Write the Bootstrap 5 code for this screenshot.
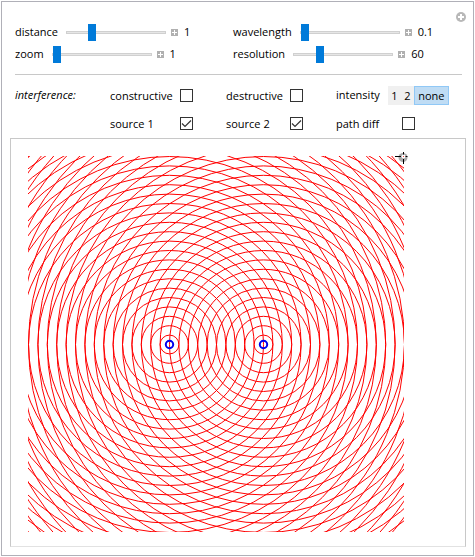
<!DOCTYPE html>
<html lang="en">
<head>
<meta charset="utf-8">
<meta name="viewport" content="width=device-width, initial-scale=1">
<title>Two-source interference</title>
<link rel="stylesheet" href="https://cdn.jsdelivr.net/npm/bootstrap@5.3.0/dist/css/bootstrap.min.css">
<style>
body { font: 11px/16px "Open Sans", "Noto Sans", sans-serif; color: #000; background: #fff; padding: 1px 1px 0; }
.demo { border: 1px solid #b0b0b8; padding: 19px 7px 8px 8px; }
.controls { padding: 0 3px 1px 5px; }
.ctl { height: 22px; gap: 8px; }
.ctl-a { width: 218px; }
.slider { appearance: none; -webkit-appearance: none; width: 100px; height: 17px; margin: 0; background: transparent; }
.slider::-webkit-slider-runnable-track { height: 3px; background: #e6e6e6; border: 1px solid #d0d0d0; }
.slider::-webkit-slider-thumb { -webkit-appearance: none; width: 8px; height: 17px; margin-top: -8px; background: #007ad9; border: 0; }
.step { width: 7px; height: 7px; margin: 0 -2px 0 -3px; line-height: 7px; }
.step svg, .more svg { display: block; }
.more { top: 10px; right: 7px; }
.rule { border-top: 1px solid #c8c8c8; margin: 9px 1px 0 0; }
.opts { display: grid; grid-template-columns: 95px 116px 110px 1fr; padding-top: 6px; }
.opt { height: 28px; }
.opt label { width: 70px; padding-top: 2px; }
.opt-b label { width: 64px; }
.opt-c label { width: 66px; }
.tick { appearance: none; -webkit-appearance: none; width: 13px; height: 13px; margin: 0; border: 1px solid #333; background: #fff; }
.tick:checked { background: url("data:image/svg+xml,%3Csvg xmlns='http://www.w3.org/2000/svg' viewBox='0 0 11 11'%3E%3Cpath d='M1 5.5 4 8.500 10 2.500' fill='none' stroke='%23333' stroke-width='1.2'/%3E%3C/svg%3E"); }
.seg { background: #f0f0f0; height: 19px; }
.seg button { border: 0; background: none; padding: 0; width: 13px; color: #000; line-height: 17px; }
.seg .chosen { width: 35px; background: #bfdcf4; border: 1px solid #90c8f6; }
.stage { border: 1px solid #c8c8c8; border-bottom-color: #e2e2e2; padding: 17px 61px 14px 17px; }
.plot { display: block; width: 100%; }
.locator { width: 13px; height: 13px; top: -5px; right: -4px; }
</style>
<script src="https://cdn.jsdelivr.net/npm/bootstrap@5.3.0/dist/js/bootstrap.bundle.min.js"></script>
</head>
<body>
<svg class="d-none"><symbol id="plus" viewBox="0 0 7 7"><path fill="#b0b0b0" d="M0 0h7v7H0z"/><path fill="#fff" d="M3 1h1v5H3zM1 3h5v1H1z"/></symbol></svg>
<main class="demo position-relative">
<button class="more btn p-0 border-0 position-absolute" aria-label="More options"><svg width="10" height="10"><circle cx="5" cy="5" r="5" fill="#b8b8b8"/><path d="M4 2h2v2h2v2H6v2H4V6H2V4h2z" fill="#fff"/></svg></button>
<section class="controls">
<div class="d-flex">
<div class="ctl ctl-a d-flex align-items-center"><label for="distance">distance</label><input class="slider" id="distance" type="range" min="0" max="100" value="23"><button class="step btn p-0 border-0" aria-label="Expand distance"><svg width="7" height="7"><use href="#plus"/></svg></button><output>1</output></div>
<div class="ctl d-flex align-items-center"><label for="wavelength">wavelength</label><input class="slider" id="wavelength" type="range" min="0" max="100" value="0"><button class="step btn p-0 border-0" aria-label="Expand wavelength"><svg width="7" height="7"><use href="#plus"/></svg></button><output>0.1</output></div>
</div>
<div class="d-flex">
<div class="ctl ctl-a d-flex align-items-center"><label for="zoom">zoom</label><input class="slider" id="zoom" type="range" min="0" max="100" value="0"><button class="step btn p-0 border-0" aria-label="Expand zoom"><svg width="7" height="7"><use href="#plus"/></svg></button><output>1</output></div>
<div class="ctl d-flex align-items-center"><label for="resolution">resolution</label><input class="slider" id="resolution" type="range" min="0" max="100" value="24"><button class="step btn p-0 border-0" aria-label="Expand resolution"><svg width="7" height="7"><use href="#plus"/></svg></button><output>60</output></div>
</div>
<div class="rule"></div>
<div class="opts">
<div class="opt d-flex align-items-center fst-italic">interference:</div>
<div class="opt d-flex align-items-center"><label for="con">constructive</label><input class="tick" id="con" type="checkbox"></div>
<div class="opt opt-b d-flex align-items-center"><label for="des">destructive</label><input class="tick" id="des" type="checkbox"></div>
<div class="opt d-flex align-items-center"><span class="me-2" id="intensity">intensity</span><div class="seg d-flex" role="group" aria-labelledby="intensity"><button type="button">1</button><button type="button">2</button><button type="button" class="chosen" aria-pressed="true">none</button></div></div>
<div class="opt"></div>
<div class="opt d-flex align-items-center"><label for="s1">source 1</label><input class="tick" id="s1" type="checkbox" checked></div>
<div class="opt opt-b d-flex align-items-center"><label for="s2">source 2</label><input class="tick" id="s2" type="checkbox" checked></div>
<div class="opt opt-c d-flex align-items-center"><label for="pd">path diff</label><input class="tick" id="pd" type="checkbox"></div>
</div>
</section>
<section class="stage">
<div class="position-relative">
<svg class="plot" viewBox="0 0 376 376" role="img" aria-label="Wavefronts from two sources"><g id="waves" fill="none" stroke="#f00" stroke-width="1"></g><g fill="none" stroke="#00e" stroke-width="2"><circle cx="141.5" cy="188.5" r="3.7"/><circle cx="235.5" cy="188.5" r="3.7"/></g></svg>
<svg class="locator position-absolute" viewBox="0 0 13 13"><circle cx="8" cy="6.5" r="4.5" fill="#aaa"/><circle cx="8.5" cy="5.5" r="2" fill="#fff"/><path d="M8 5h1v1H8z" fill="#f44"/><path d="M0 5.500h6M10.500 5.500h2M8.500 1v2.500M8.500 8v5" fill="none" stroke="#000"/></svg>
</div>
</section>
</main>
<script>
const waves = document.getElementById("waves");
for (const cx of [141.5, 235.5]) {
  for (let n = 1; n <= 33; n++) {
    const c = document.createElementNS("http://www.w3.org/2000/svg", "circle");
    c.setAttribute("cx", cx);
    c.setAttribute("cy", 188.5);
    c.setAttribute("r", 9.4 * n);
    waves.append(c);
  }
}
</script>
</body>
</html>
